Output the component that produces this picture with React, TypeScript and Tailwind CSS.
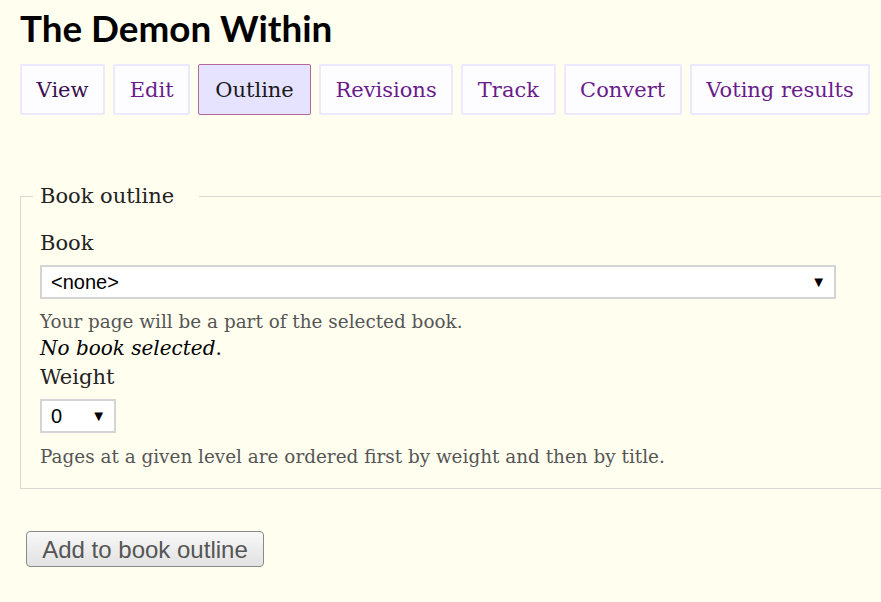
const tabs = [
  { label: "View", active: false, dark: true },
  { label: "Edit", active: false },
  { label: "Outline", active: true },
  { label: "Revisions", active: false },
  { label: "Track", active: false },
  { label: "Convert", active: false },
  { label: "Voting results", active: false },
];

const serif = { fontFamily: "'DejaVu Serif', Georgia, serif" };
const sans = { fontFamily: "'Liberation Sans', Arial, sans-serif" };

export default function App() {
  return (
    <div className="min-h-[602px] w-[881px] overflow-hidden bg-[#fffeef] pl-[20px]" style={serif}>
      {/* Title */}
      <h1
        className="pt-[6px] text-[36.8px] font-bold leading-[44px] text-black"
        style={{ fontFamily: "Lato, 'DejaVu Sans', sans-serif" }}
      >
        The Demon Within
      </h1>

      {/* Tabs */}
      <ul className="mt-[14px] flex gap-[8px]">
        {tabs.map((t) => (
          <li
            key={t.label}
            className={
              t.active
                ? "flex h-[51px] items-center rounded-[2px] border border-[#b4689a] bg-[#e5e3ff] px-[16px] pt-[3px] text-[21px] text-[#1a1a1a]"
                : "flex h-[51px] items-center rounded-[2px] border-2 border-[#ebe8ff] bg-[#fdfcff] px-[14.6px] pt-[3px] text-[21px] text-[#6a1b8a]"
            }
          >
            <span className={t.dark ? "text-[#3b1050]" : ""}>{t.label}</span>
          </li>
        ))}
      </ul>

      {/* Book outline */}
      <fieldset className="mt-[68px] w-[900px] border border-[#d8d8d0] pb-[18px] pl-[19px]">
        <legend className="-ml-[7px] pl-[7px] pr-[25px] text-[21px] leading-[26px] text-[#222]">
          Book outline
        </legend>

        <label className="mt-[20px] block text-[21px] leading-[28px] text-[#222]">Book</label>
        <div
          className="mt-[8px] flex h-[34px] w-[796px] items-center justify-between border-2 border-[#d4d4d4] bg-white pl-[9px] pr-[8px] text-[20px] text-black"
          style={sans}
        >
          <span>&lt;none&gt;</span>
          <span className="text-[15px]">▼</span>
        </div>
        <p className="mt-[10px] text-[18.4px] leading-[26px] text-[#555]">
          Your page will be a part of the selected book.
        </p>
        <p className="text-[20px] leading-[26px] text-black">
          <em>No book selected</em>.
        </p>
        <label className="mt-[2px] block text-[21px] leading-[28px] text-[#222]">Weight</label>
        <div
          className="mt-[8px] flex h-[34px] w-[76px] items-center justify-between border-2 border-[#d4d4d4] bg-white pl-[9px] pr-[8px] text-[20px] text-black"
          style={sans}
        >
          <span>0</span>
          <span className="text-[15px]">▼</span>
        </div>
        <p className="mt-[11px] text-[18.4px] leading-[26px] text-[#555]">
          Pages at a given level are ordered first by weight and then by title.
        </p>
      </fieldset>

      {/* Submit */}
      <button
        className="ml-[6px] mt-[42px] h-[36px] w-[238px] rounded-[4px] border border-[#8a8a8a] bg-gradient-to-b from-[#f8f8f8] to-[#e2e2e2] text-[24px] text-[#555]"
        style={sans}
      >
        Add to book outline
      </button>
    </div>
  );
}
